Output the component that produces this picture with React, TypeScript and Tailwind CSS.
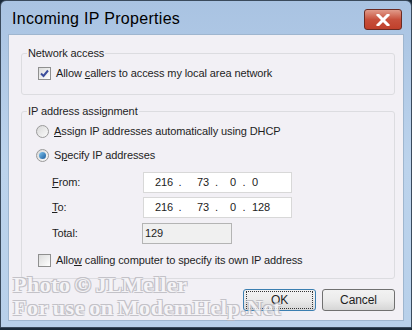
import React from "react";

const ui = { fontFamily: '"Liberation Sans", Arial, sans-serif' };

function Check({ checked }: { checked?: boolean }) {
  return (
    <span className="flex h-[13px] w-[13px] shrink-0 items-center justify-center border border-[#8f8f8f] bg-gradient-to-br from-[#dcdcdc] to-[#ffffff]">
      {checked && (
        <svg width="11" height="11" viewBox="0 0 11 11">
          <path d="M2 5.5 L4.5 8 L9 2.5" fill="none" stroke="#3c4e9c" strokeWidth="2" />
        </svg>
      )}
    </span>
  );
}

function Radio({ checked }: { checked?: boolean }) {
  return (
    <span className="flex h-[13px] w-[13px] shrink-0 items-center justify-center rounded-full border border-[#9a9a9a] bg-gradient-to-br from-[#d8d8d8] to-[#fbfbfb]">
      {checked && <span className="h-[7px] w-[7px] rounded-full bg-gradient-to-br from-[#7fc6f0] to-[#1a5c9c]" />}
    </span>
  );
}

function IpBox({ parts }: { parts: string[] }) {
  return (
    <div className="flex h-[21px] w-[149px] items-center border border-[#d8d8d8] bg-white text-[11px] text-[#222]">
      <span className="w-[29px] text-right">{parts[0]}</span>
      <span className="w-[14px] text-center">.</span>
      <span className="w-[22px] text-right">{parts[1]}</span>
      <span className="w-[15px] text-center">.</span>
      <span className="w-[12px] text-right">{parts[2]}</span>
      <span className="w-[16px] text-center">.</span>
      <span className="w-[22px] text-left">{parts[3]}</span>
    </div>
  );
}

export default function App() {
  return (
    <div className="relative h-[330px] w-[412px] overflow-hidden bg-[#1a2a3a]" style={ui}>
      <div className="absolute inset-0 h-[328px] rounded-t-[6px] border border-[#3a4a5c] bg-gradient-to-b from-[#a9c3e2] via-[#bcd3ec] to-[#b8d0ea]">
        {/* Title bar */}
        <div className="flex h-[33px] items-center justify-between pl-[11px] pr-[9px]">
          <span className="mt-[2px] text-[16px] text-black" style={{ letterSpacing: "0.3px" }}>
            Incoming IP Properties
          </span>
          <div className="mt-[4px] flex h-[21px] w-[38px] items-center justify-center rounded-[3px] border border-[#6b2a22] bg-gradient-to-b from-[#e09a8a] via-[#c7503c] to-[#c0402b]">
            <svg width="14" height="12" viewBox="0 0 14 12">
              <path d="M2 1 L12 11 M12 1 L2 11" stroke="#ffffff" strokeWidth="3" strokeLinecap="square" />
            </svg>
          </div>
        </div>
        {/* Client area */}
        <div
          className="relative mx-[7px] h-[287px] border border-[#9fb6cf] bg-[#f2f0f5] text-[11px] text-[#1e1e1e]"
          style={{ letterSpacing: "-0.1px" }}
        >
          {/* Network access */}
          <fieldset className="absolute left-[12px] top-[11px] h-[49px] w-[374px] rounded-[3px] border border-[#dcdce0] px-[6px]">
            <legend className="ml-[-1px] px-[1px] leading-[14px]">Network access</legend>
            <div className="ml-[10px] mt-[5px] flex items-center gap-[5px]">
              <Check checked />
              <span>
                Allow <u>c</u>allers to access my local area network
              </span>
            </div>
          </fieldset>
          {/* IP assignment */}
          <fieldset className="absolute left-[12px] top-[69px] h-[175px] w-[374px] rounded-[3px] border border-[#dcdce0] px-[6px]">
            <legend className="ml-[-1px] px-[1px] leading-[14px]">IP address assignment</legend>
            <div className="ml-[8px] mt-[5px] flex h-[17px] items-center gap-[5px]">
              <Radio />
              <span>
                <u>A</u>ssign IP addresses automatically using DHCP
              </span>
            </div>
            <div className="ml-[8px] mt-[7px] flex h-[17px] items-center gap-[5px]">
              <Radio checked />
              <span>
                S<u>p</u>ecify IP addresses
              </span>
            </div>
            <div className="ml-[24px] mt-[8px] flex items-center">
              <span className="w-[91px]">
                <u>F</u>rom:
              </span>
              <IpBox parts={["216", "73", "0", "0"]} />
            </div>
            <div className="ml-[24px] mt-[4px] flex items-center">
              <span className="w-[91px]">
                <u>T</u>o:
              </span>
              <IpBox parts={["216", "73", "0", "128"]} />
            </div>
            <div className="ml-[24px] mt-[5px] flex items-center">
              <span className="w-[90px]">Total:</span>
              <div className="flex h-[21px] w-[90px] items-center border border-[#b4b4b4] bg-[#f0f0f0] pl-[2px]">129</div>
            </div>
            <div className="ml-[10px] mt-[8px] flex h-[17px] items-center gap-[5px]">
              <Check />
              <span>
                Allo<u>w</u> calling computer to specify its own IP address
              </span>
            </div>
          </fieldset>
          {/* Buttons */}
          <div className="absolute left-[234px] top-[254px] flex gap-[6px]">
            <button className="flex h-[22px] w-[73px] items-center justify-center rounded-[3px] border border-[#3c7fb1] bg-gradient-to-b from-[#f2f2f2] via-[#ebebeb] to-[#d6d6d6] text-[12px] text-[#1e1e1e]">
              <span className="flex h-[18px] w-[67px] items-center justify-center border border-dotted border-[#333]">OK</span>
            </button>
            <button className="flex h-[22px] w-[73px] items-center justify-center rounded-[3px] border border-[#707070] bg-gradient-to-b from-[#f2f2f2] via-[#ebebeb] to-[#d6d6d6] text-[12px] text-[#1e1e1e]">
              Cancel
            </button>
          </div>
          {/* Watermark */}
          <div
            className="pointer-events-none absolute left-[4px] top-[238px] text-[22px] font-bold leading-[23px] text-[#f6f5f8] opacity-80"
            style={{
              fontFamily: '"Liberation Serif", serif',
              textShadow:
                "1px 1px 0 #b8b7bd, -1px -1px 0 #b8b7bd, 1px -1px 0 #b8b7bd, -1px 1px 0 #b8b7bd",
            }}
          >
            <div style={{ letterSpacing: "0.5px", wordSpacing: "-2px" }}>Photo © JLMeller</div>
            <div style={{ letterSpacing: "0.6px", wordSpacing: "-2px" }}>For use on ModemHelp.Net</div>
          </div>
        </div>
      </div>
    </div>
  );
}
